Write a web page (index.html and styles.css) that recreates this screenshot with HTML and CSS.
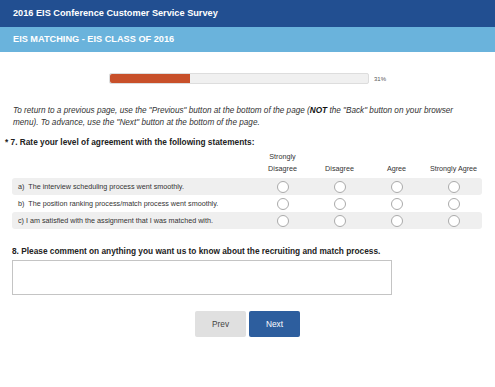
FILE: index.html
```html
<!DOCTYPE html>
<html lang="en">
<head>
    <meta charset="UTF-8">
    <title>2016 EIS Conference Customer Service Survey</title>
    <link rel="stylesheet" href="styles.css">
</head>
<body>
    <header class="survey-title">2016 EIS Conference Customer Service Survey</header>
    <div class="page-title">EIS MATCHING - EIS CLASS OF 2016</div>

    <div class="progress">
        <div class="progress-track"><div class="progress-fill" style="width: 31%"></div></div>
        <span class="progress-label">31%</span>
    </div>

    <p class="intro">To return to a previous page, use the "Previous" button at the bottom of the page (<b>NOT</b> the "Back" button on your browser menu). To advance, use the "Next" button at the bottom of the page.</p>

    <div class="question">
        <h2 class="question-title"><span class="required">*</span> 7. Rate your level of agreement with the following statements:</h2>
        <table class="matrix">
            <thead>
                <tr>
                    <th class="label-col"></th>
                    <th>Strongly<br>Disagree</th>
                    <th>Disagree</th>
                    <th>Agree</th>
                    <th>Strongly Agree</th>
                </tr>
            </thead>
            <tbody>
                <tr class="odd">
                    <td class="label-col">a)&nbsp; The interview scheduling process went smoothly.</td>
                    <td><span class="radio"></span></td>
                    <td><span class="radio"></span></td>
                    <td><span class="radio"></span></td>
                    <td><span class="radio"></span></td>
                </tr>
                <tr>
                    <td class="label-col">b)&nbsp; The position ranking process/match process went smoothly.</td>
                    <td><span class="radio"></span></td>
                    <td><span class="radio"></span></td>
                    <td><span class="radio"></span></td>
                    <td><span class="radio"></span></td>
                </tr>
                <tr class="odd">
                    <td class="label-col">c) I am satisfied with the assignment that I was matched with.</td>
                    <td><span class="radio"></span></td>
                    <td><span class="radio"></span></td>
                    <td><span class="radio"></span></td>
                    <td><span class="radio"></span></td>
                </tr>
            </tbody>
        </table>
    </div>

    <div class="question">
        <h2 class="question-title">8. Please comment on anything you want us to know about the recruiting and match process.</h2>
        <textarea class="comment"></textarea>
    </div>

    <div class="nav">
        <button class="btn btn-prev">Prev</button>
        <button class="btn btn-next">Next</button>
    </div>
</body>
</html>
```

FILE: styles.css
```css
body {
    font-family: "Liberation Sans", Arial, sans-serif;
    background-color: #fff;
    color: #222;
    margin: 0;
    padding: 0;
}
.survey-title {
    background-color: #224f91;
    color: #fff;
    font-size: 9.2px;
    font-weight: bold;
    height: 27px;
    line-height: 27px;
    padding-left: 13px;
}
.page-title {
    background-color: #6ab3dc;
    color: #fff;
    font-size: 9.2px;
    font-weight: bold;
    height: 25px;
    line-height: 25px;
    padding-left: 13px;
}
.progress {
    display: flex;
    align-items: center;
    margin: 21px 0 0 109px;
}
.progress-track {
    width: 258px;
    height: 9px;
    background-color: #f0f0f0;
    border: 1px solid #ddd;
    border-radius: 2px;
}
.progress-fill {
    height: 100%;
    background-color: #c8502a;
    border-radius: 2px 0 0 2px;
}
.progress-label {
    font-size: 6px;
    color: #555;
    margin-left: 5px;
}
.intro {
    font-size: 8.2px;
    font-style: italic;
    color: #333;
    line-height: 12px;
    margin: 21px 26px 0 13px;
}
.intro b {
    color: #111;
}
.question {
    margin: 0 12px;
}
.question-title {
    font-size: 8.3px;
    font-weight: bold;
    color: #222;
    margin: 8px 0 0 0;
}
.required {
    margin-left: -7px;
}
.matrix {
    border-collapse: collapse;
    margin-top: 4px;
    width: 470px;
    font-size: 7.2px;
    color: #333;
}
.matrix th {
    font-weight: normal;
    vertical-align: bottom;
    line-height: 12px;
    padding: 0 0 3px 0;
    width: 57px;
}
.matrix th.label-col {
    width: auto;
}
.matrix td {
    height: 17px;
    padding: 0;
    text-align: center;
}
.matrix td.label-col {
    text-align: left;
    padding-left: 6px;
}
.matrix tr.odd td {
    background-color: #efefef;
}
.matrix tr.odd td:first-child {
    border-radius: 3px 0 0 3px;
}
.matrix tr.odd td:last-child {
    border-radius: 0 3px 3px 0;
}
.radio {
    display: inline-block;
    width: 10px;
    height: 10px;
    border: 1px solid #aaa;
    border-radius: 50%;
    background-color: #fff;
    vertical-align: middle;
}
.question + .question .question-title {
    margin-top: 17px;
}
.comment {
    display: block;
    width: 380px;
    height: 35px;
    box-sizing: border-box;
    border: 1px solid #c4c4c4;
    margin-top: 4px;
    resize: none;
}
.nav {
    display: flex;
    justify-content: center;
    gap: 3px;
    margin-top: 16px;
}
.btn {
    font-family: "Liberation Sans", Arial, sans-serif;
    font-size: 8.3px;
    width: 51px;
    height: 26px;
    border: none;
    border-radius: 2px;
}
.btn-prev {
    background-color: #e0e0e0;
    color: #444;
}
.btn-next {
    background-color: #2d5e9e;
    color: #fff;
}
```
